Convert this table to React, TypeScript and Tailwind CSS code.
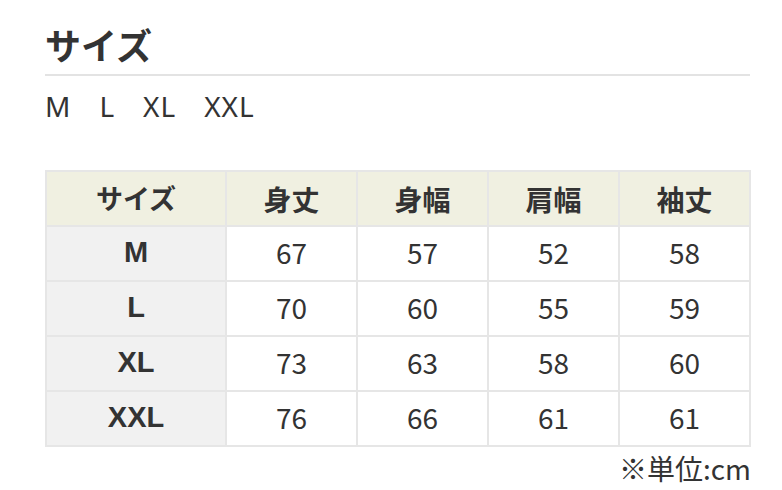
const jp = { fontFamily: '"Noto Sans CJK JP", "Noto Sans", sans-serif' }
const ar = { fontFamily: '"Liberation Sans", Arial, sans-serif' }
const ns = { fontFamily: '"Noto Sans", "Noto Sans CJK JP", sans-serif' }

const rows = [
    { size: "M", values: [67, 57, 52, 58] },
    { size: "L", values: [70, 60, 55, 59] },
    { size: "XL", values: [73, 63, 58, 60] },
    { size: "XXL", values: [76, 66, 61, 61] },
]

const heads = ["身丈", "身幅", "肩幅", "袖丈"]

export default function App() {
    return (
        <div className="w-[782px] h-[490px] bg-white text-[#333] pl-[45px] pr-[32px] pt-[20px]" style={jp}>
            <h2 className="text-[36px] font-bold leading-[48px] pb-[6px] border-b-2 border-[#e3e3e3]">サイズ</h2>
            <div className="flex gap-[28px] text-[28px] tracking-[1px] leading-[40px] mt-[10px]" style={ns}>
                <span>M</span>
                <span>L</span>
                <span>XL</span>
                <span>XXL</span>
            </div>

            <table className="mt-[44px] w-[706px] border-collapse table-fixed">
                <colgroup>
                    <col className="w-[180px]" />
                    <col />
                    <col />
                    <col />
                    <col />
                </colgroup>
                <thead>
                    <tr className="h-[55px] bg-[#f0f0e1]">
                        <th className="border-2 border-[#e6e6e6] font-bold text-[27px]">サイズ</th>
                        {heads.map((h) => (
                            <th key={h} className="border-2 border-[#e6e6e6] font-bold text-[28px]">
                                {h}
                            </th>
                        ))}
                    </tr>
                </thead>
                <tbody>
                    {rows.map((r) => (
                        <tr key={r.size} className="h-[55px]">
                            <td className="border-2 border-[#e6e6e6] bg-[#f1f1f1] text-center font-bold text-[29px] leading-none pb-[2px]" style={ar}>
                                {r.size}
                            </td>
                            {r.values.map((v, i) => (
                                <td key={i} className="border-2 border-[#e6e6e6] text-center text-[28px] leading-none pb-[3px]">
                                    {v}
                                </td>
                            ))}
                        </tr>
                    ))}
                </tbody>
            </table>

            <p className="w-[706px] text-right text-[28px] leading-[40px] mt-[1px]">※単位:cm</p>
        </div>
    )
}
